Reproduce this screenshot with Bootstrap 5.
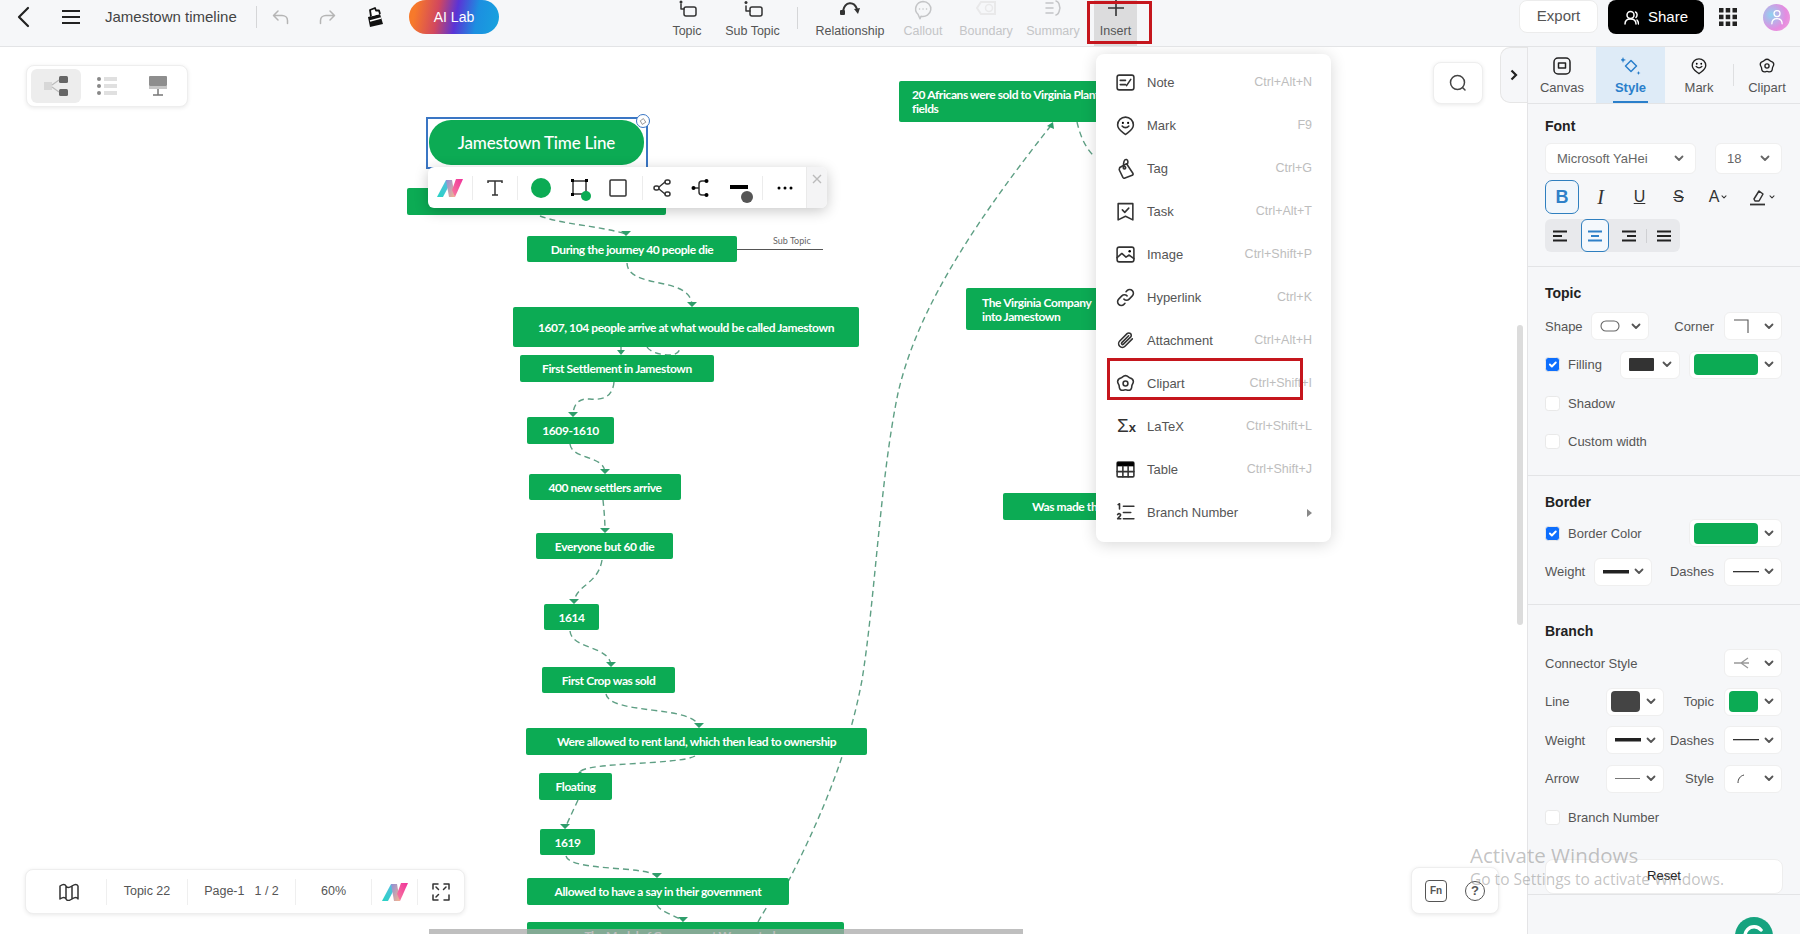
<!doctype html>
<html lang="en">
<head>
<meta charset="UTF-8" />
<title>Jamestown timeline</title>
<link href="https://cdn.jsdelivr.net/npm/bootstrap@5.3.0/dist/css/bootstrap.min.css" rel="stylesheet" />
<script src="https://cdn.jsdelivr.net/npm/bootstrap@5.3.0/dist/js/bootstrap.bundle.min.js"></script>
<style>
  html, body { height: 100%; margin: 0; overflow: hidden; }
  body { font-family: "Liberation Sans", Arial, sans-serif; font-size: 13px; color: #555; background: #fff; }
  .app { height: 100vh; position: relative; }
  .ic { fill: none; stroke: currentColor; stroke-width: 1.5; stroke-linecap: round; stroke-linejoin: round; }

  /* top bar */
  .topbar { height: 47px; flex: none; background: #f6f7f9; border-bottom: 1px solid #e3e4e6; overflow: hidden; }
  .tb-back { margin: -12px 0 0 16px; color: #222; }
  .tb-burger { margin: -12px 0 0 32px; color: #222; }
  .tb-title { margin: -12px 0 0 25px; width: 151px; font-size: 15px; color: #444; white-space: nowrap; }
  .tb-sep { width: 1px; height: 22px; margin-top: -12px; background: #d5d6d8; flex: none; }
  .tb-undo { margin: -12px 0 0 15px; color: #b5b5b5; }
  .tb-redo { margin: -12px 0 0 30px; color: #b5b5b5; }
  .tb-bucket { margin: -12px 0 0 30px; color: #111; }
  .ai-pill { margin-left: 26px; width: 90px; height: 34px; margin-top: -12px; border-radius: 17px; color: #fff; font-size: 14px;
    background: linear-gradient(100deg, #f7792a 8%, #d2475e 32%, #5a34d6 52%, #1c8fe0 74%, #17a3de 100%); }
  .tools { margin-left: 156px; }
  .tool { height: 46px; color: #555; white-space: nowrap; font-size: 12.5px; }
  .tool svg { display: block; color: #333; }
  .tool span { margin-top: 3px; line-height: 16px; }
  .tool.off, .tool.off svg { color: #c4c5c7; }
  .w-topic { width: 64px; } .w-sub { width: 67px; } .w-rel { width: 78px; } .w-call { width: 68px; }
  .w-bound { width: 58px; } .w-sum { width: 76px; } .w-ins { width: 43px; margin: 0 4px 0 3px; background: #dcdcdd; }
  .tool-sep { width: 1px; height: 22px; background: #d5d6d8; margin: 7px 13px 0 11px; }
  .btn-export { width: 79px; height: 33px; margin-top: -13px; background: #fff; border: 1px solid #ececec; border-radius: 8px; font-size: 15px; color: #555; }
  .btn-share { width: 96px; height: 34px; margin-top: -12px; margin-left: 10px; background: #000; border-radius: 8px; color: #fff; font-size: 15px; gap: 9px; }
  .tb-grid { margin-left: 15px; margin-top: -12px; }
  .tb-avatar { width: 27px; height: 27px; margin: -12px 10px 0 26px; border-radius: 50%;
    background: radial-gradient(circle at 30% 40%, #8fd3f0, #e58be0 60%, #f2a6d8); color: #fff; }
  .note-red { position: absolute; border: 3px solid #c5161d; pointer-events: none; z-index: 30; }
  .red-ins { left: 1087px; top: 1px; width: 65px; height: 43px; }
  .red-clip { left: 1107px; top: 311px; width: 196px; height: 42px; }

  /* canvas */
  .stage { flex: 1 1 auto; position: relative; overflow: hidden; background: #fff; min-width: 0; }
  .wires { position: absolute; left: 0; top: 0; }
  .wire { fill: none; stroke: #5e9f84; stroke-width: 1.4; stroke-dasharray: 6 4; }
  .tip { fill: #2f9e6b; }
  .nd { position: absolute; background: #0cab54; color: #fff; border-radius: 2px; display: flex; align-items: center; justify-content: center; padding-top: 1px;
    font-family: Lato, "Open Sans", sans-serif; font-weight: 700; font-size: 12px; letter-spacing: -.4px; white-space: nowrap; line-height: 14px; }
  .nd-left { justify-content: flex-start; text-align: left; }
  #n0 { left: 429px; top: 73px; width: 215px; height: 45px; border-radius: 22px; font-size: 17px; letter-spacing: -.2px; font-weight: 500; }
  #n1 { left: 407px; top: 141px; width: 259px; height: 27px; }
  #n2 { left: 527px; top: 189px; width: 210px; height: 26px; }
  #n3 { left: 513px; top: 260px; width: 346px; height: 40px; }
  #n4 { left: 520px; top: 308px; width: 194px; height: 27px; }
  #n5 { left: 527px; top: 370px; width: 87px; height: 27px; }
  #n6 { left: 529px; top: 427px; width: 152px; height: 26px; }
  #n7 { left: 536px; top: 486px; width: 137px; height: 26px; }
  #n8 { left: 544px; top: 557px; width: 55px; height: 26px; }
  #n9 { left: 542px; top: 620px; width: 133px; height: 26px; }
  #n10 { left: 526px; top: 681px; width: 341px; height: 27px; }
  #n11 { left: 539px; top: 726px; width: 73px; height: 27px; }
  #n12 { left: 540px; top: 782px; width: 55px; height: 26px; }
  #n13 { left: 527px; top: 831px; width: 262px; height: 27px; }
  #n14 { left: 527px; top: 875px; width: 317px; height: 27px; }
  #n15 { left: 899px; top: 34px; width: 300px; height: 41px; padding-left: 13px; }
  #n16 { left: 966px; top: 241px; width: 200px; height: 42px; padding-left: 16px; }
  #n17 { left: 1003px; top: 446px; width: 150px; height: 27px; padding-left: 29px; }
  .sel-box { position: absolute; left: 426px; top: 70px; width: 222px; height: 52px; border: 2px solid #3a76c4; }
  .sel-dot { position: absolute; left: 636px; top: 67px; width: 14px; height: 14px; background: #fff; border: 1.5px solid #3a76c4; border-radius: 50%; color: #555; }
  .sub-line { position: absolute; left: 737px; top: 202px; width: 86px; height: 1px; background: #555; }
  .sub-txt { position: absolute; left: 773px; top: 188px; font-family: Lato, sans-serif; font-size: 9px; color: #666; line-height: 12px; }

  .float-box { position: absolute; background: #fff; border: 1px solid #eee; border-radius: 8px; box-shadow: 0 1px 4px rgba(0,0,0,.09); }
  .palette { left: 26px; top: 18px; width: 162px; height: 42px; padding: 3px 4px; }
  .pal-on { width: 51px; background: #ededed; border-radius: 6px; }
  .pal-b { width: 52px; }
  .search-box { left: 1433px; top: 15px; width: 50px; height: 42px; color: #444; }
  .fold-tab { position: absolute; left: 1500px; top: 0; width: 27px; height: 56px; background: #f6f7f9; border: 1px solid #e6e6e6; border-right: 0; border-radius: 10px 0 0 10px; color: #222; }
  .vbar { position: absolute; left: 1517px; top: 278px; width: 6px; height: 300px; background: #dcdcdc; border-radius: 3px; }
  .hbar { position: absolute; left: 429px; top: 882px; width: 594px; height: 5px; background: rgba(170,170,170,.75); }

  .node-bar { position: absolute; left: 428px; top: 120px; width: 399px; height: 41px; background: #fff; border-radius: 6px; box-shadow: 0 3px 14px rgba(0,0,0,.22); color: #333; overflow: hidden; }
  .nb-logo { width: 44px; } .nb-cell { width: 44px; } .nb-c2 { width: 38.5px; position: relative; }
  .nb-sep { width: 1px; height: 24px; background: #ececec; flex: none; }
  .nb-gap { width: 4px; } .nb-more { width: 43px; color: #444; }
  .nb-x { flex: 1; background: #f4f4f5; border-left: 1px solid #eaeaea; color: #bbb; height: 100%; padding-top: 7px; }
  .nb-pip { position: absolute; border-radius: 50%; }
  .pip-g { width: 10px; height: 10px; background: #0cab54; left: 20px; top: 12px; }
  .pip-k { width: 12px; height: 12px; background: #555; left: 21px; top: 9px; }
  .nb-round { width: 20px; height: 20px; background: #0cab54; border-radius: 50%; }

  /* insert menu */
  .dropdown-menu.ins-menu { left: 1096px; top: 7px; width: 235px; height: 488px; padding: 7px 0 0; border: 0; border-radius: 8px; box-shadow: 0 2px 16px rgba(0,0,0,.16); z-index: 20; }
  .ins-menu .dropdown-item { height: 43px; padding: 0 19px 0 19px; display: flex; align-items: center; font-size: 13px; color: #555; }
  .ins-menu svg { color: #333; flex: none; }
  .mi-ico { width: 21px; margin-right: 11px; flex: none; }
  .mi-key { margin-left: auto; color: #bdbdbd; font-size: 12.5px; }
  .sigma { font-size: 19px; line-height: 18px; color: #333; padding-left: 2px; white-space: nowrap; }
  .sigma small { font-size: 13px; font-weight: 700; }

  .stat-bar { left: 25px; top: 822px; width: 440px; height: 45px; color: #555; font-size: 12.5px; }
  .sb-sep { width: 1px; height: 26px; background: #efefef; flex: none; }
  .sb-map { width: 80px; color: #333; padding-left: 5px; } .sb-topic { width: 80px; } .sb-page { width: 107px; gap: 10px; }
  .sb-zoom { width: 75px; } .sb-logo { width: 45px; } .sb-full { flex: 1; color: #333; }
  .fn-box { left: 1411px; top: 820px; width: 88px; height: 47px; gap: 18px; color: #555; }
  .fn-ico { width: 22px; height: 22px; border: 1.6px solid #555; border-radius: 4px; font-size: 10px; font-weight: 700; }
  .qm-ico { width: 20px; height: 20px; border: 1.6px solid #555; border-radius: 50%; font-size: 13px; font-weight: 700; }

  /* side panel */
  .side { width: 273px; flex: none; background: #f6f7f9; border-left: 1px solid #e4e4e6; position: relative; overflow: hidden; }
  .tabs { height: 57px; border-bottom: 1px solid #e3e4e6; margin-left: 0; }
  .tabx { color: #555; font-size: 13px; position: relative; line-height: 16px; padding-top: 2px; }
  .tabx svg { color: #222; margin-bottom: 5px; }
  .tx-a { width: 68px; } .tx-b { width: 69px; background: #deebf7; color: #2a7fcb; font-weight: 700; }
  .tx-b svg { color: #2a7fcb; }
  .tx-b::after { content: ""; position: absolute; left: 17px; width: 35px; bottom: 0; height: 2px; background: #2a7fcb; }
  .tx-sep { width: 1px; height: 22px; background: #dedfe1; align-self: center; }
  .sect { padding: 0 18px 0 17px; border-bottom: 1px solid #e3e4e6; }
  .sect:last-child { border-bottom: 0; }
  .sect h6 { font-size: 14px; font-weight: 700; color: #222; line-height: 16px; margin: 0; }
  .s-font { padding-top: 14px; padding-bottom: 14px; } .s-font h6 { margin-bottom: 9px; }
  .s-topic { padding-top: 18px; padding-bottom: 14px; } .s-topic h6 { margin-bottom: 6px; }
  .s-border { padding-top: 18px; padding-bottom: 13px; } .s-border h6 { margin-bottom: 4px; }
  .s-branch { padding-top: 18px; } .s-branch h6 { margin-bottom: 5px; }
  .prow { height: 38.5px; white-space: nowrap; }
  .pk { height: 28px; background: #fff; border: 1px solid #efefef; border-radius: 6px; padding: 0 7px 0 8px; flex: none; }
  .pk-f { width: 151px; height: 31px; padding: 0 11px; color: #666; }
  .pk-s { width: 67px; height: 31px; padding: 0 11px; color: #666; }
  .pk-58 { width: 58px; } .pk-60 { width: 60px; } .pk-93 { width: 93px; padding-left: 4px; }
  .swatch { height: 21px; border-radius: 4px; flex: 1; margin-right: 6px; }
  .sw-g { background: #0cab54; } .sw-k { background: #444; } .sw-d { background: #333; height: 13px; border-radius: 1px; margin: 0 8px 0 0; }
  .lb-47 { width: 46px; } .lb-49 { width: 49px; } .lb-61 { width: 61px; }
  .lb-r { margin-left: auto; margin-right: 10px; }
  .form-check-input.ck { width: 15px; height: 15px; margin: 0 8px 0 0; flex: none; border-color: #e9e9e9; }
  .lb-fill { width: 52px; }
  .fmt-row { height: 34px; margin-top: 6px; color: #333; font-size: 16px; }
  .fb { height: 34px; width: 39px; flex: none; }
  .fb-bold { width: 34px; margin-right: 2px; border: 1px solid #2f7fbf; border-radius: 7px; background: #f1f6fb; color: #2f80c8; font-weight: 700; font-size: 18px; }
  .fb-i { font-family: "Liberation Serif", serif; font-style: italic; font-size: 20px; }
  .fb-u { text-decoration: underline; } .fb-s { text-decoration: line-through; }
  .fb-a { width: 38px; margin-left: 1px; gap: 2px; } .fb-h { width: 50px; gap: 2px; }
  .al-row { width: 135px; height: 33px; margin-top: 5px; background: #e8e9ec; border-radius: 6px; color: #222; }
  .al { height: 33px; flex: none; }
  .al-1 { width: 30px; margin-right: 6px; } .al-2 { width: 28px; background: #f4f8fc; border: 1px solid #2f7fbf; border-radius: 6px; color: #2f80c8; }
  .al-3 { width: 34px; margin-left: 3px; } .al-4 { width: 33px; }
  .al-sep { width: 1px; height: 14px; background: #cfd0d3; }
  .btn-reset { display: block; width: 238px; height: 35px; margin-top: 22px; padding: 0; background: #fff; border: 1px solid #eee; border-radius: 8px; color: #222; font-size: 13px; }
  .gram { position: absolute; left: 207px; top: 870px; width: 38px; height: 38px; border-radius: 50%; background: #15a37f; color: #fff; }

  .act-win { position: absolute; left: 1470px; top: 842px; color: rgba(110,110,110,.42); font-family: "Open Sans", sans-serif; pointer-events: none; z-index: 40; white-space: nowrap; }
  .act-win b { display: block; font-weight: 400; font-size: 20.5px; line-height: 26px; }
  .act-win i { display: block; font-style: normal; font-size: 15.5px; line-height: 22px; }
</style>
</head>
<body>
<svg width="0" height="0" class="position-absolute">
  <defs>
    <linearGradient id="logoA" x1="0" y1="1" x2="1" y2="0"><stop offset="0" stop-color="#27d3c3"/><stop offset="1" stop-color="#5fb9e6"/></linearGradient>
    <linearGradient id="logoB" x1="0" y1="0" x2="1" y2="1"><stop offset="0" stop-color="#8c8fd8"/><stop offset="1" stop-color="#f7b48f"/></linearGradient>
    <linearGradient id="logoC" x1="0" y1="1" x2="1" y2="0"><stop offset="0" stop-color="#f77f9f"/><stop offset="1" stop-color="#f0309a"/></linearGradient>
    <symbol id="i-logo" viewBox="0 0 26 20"><path fill="url(#logoA)" d="M0 19 9 2h6L6 19Z"/><path fill="url(#logoB)" d="M9 2h6l3 17h-6Z"/><path fill="url(#logoC)" d="M15 12 19 1h7l-8 18Z"/></symbol>
    <symbol id="i-note" viewBox="0 0 20 20"><rect class="ic" x="2" y="3" width="16" height="14" rx="2"/><path class="ic" d="M5 8h5M5 12h5M11 13l4-6"/></symbol>
    <symbol id="i-mark" viewBox="0 0 20 20"><path class="ic" d="M10 18.5C7 16 2.5 14 2.5 9.5a7.5 7.5 0 0 1 15 0C17.5 14 13 16 10 18.5Z"/><path class="ic" d="M6.8 10.5c1.6 2 4.8 2 6.4 0"/><circle cx="7.5" cy="7.5" r="1"/><circle cx="12.5" cy="7.5" r="1"/></symbol>
    <symbol id="i-tag" viewBox="0 0 20 20"><path class="ic" d="M4.5 9 11 5.5l6 9a1.5 1.5 0 0 1-.6 2L9.5 19a1.5 1.5 0 0 1-2-.5L4 11.2Z"/><circle class="ic" cx="9" cy="9.3" r="1.2"/><path class="ic" d="M8.5 8C7.5 4 9 1 11 1.5c1.7.5 1.5 3 .7 4.5"/></symbol>
    <symbol id="i-task" viewBox="0 0 20 20"><path class="ic" d="M3 2.5h14V18l-7-3.5L3 18Z"/><path class="ic" d="M7 8.5l2.3 2.3 3.8-4"/></symbol>
    <symbol id="i-image" viewBox="0 0 20 20"><rect class="ic" x="2" y="3" width="16" height="14" rx="2"/><path class="ic" d="M2 13l4.5-4 4 3.5 3-2 4.5 3.5"/><circle cx="14" cy="7" r="1.2"/></symbol>
    <symbol id="i-link" viewBox="0 0 20 20"><path class="ic" d="M8.5 11.5a3.5 3.5 0 0 0 5 0l3-3a3.5 3.5 0 0 0-5-5l-1 1"/><path class="ic" d="M11.5 8.5a3.5 3.5 0 0 0-5 0l-3 3a3.5 3.5 0 0 0 5 5l1-1"/></symbol>
    <symbol id="i-clip" viewBox="0 0 20 20"><path class="ic" d="M16.5 8.5l-7 7a3.5 3.5 0 0 1-5-5l7-7a2.3 2.3 0 0 1 3.3 3.3L8 13.5A1 1 0 0 1 6.5 12L13 5.5"/></symbol>
    <symbol id="i-art" viewBox="0 0 20 20"><path class="ic" d="M10 2.500c2 0 3 1.500 4 2 1.500.5 3.500 1.500 3.500 3.500s-1.500 3-1.500 4.500c0 2.500-1.500 4-3.500 4-1 0-1.500-.5-2.500-.5s-1.500.5-2.500.5c-2 0-3.500-1.500-3.500-4C4 11 2.500 10 2.500 8s2-3 3.500-3.500c1-.5 2-2 4-2Z"/><circle class="ic" cx="10" cy="10" r="2.300"/></symbol>
    <symbol id="i-table" viewBox="0 0 20 20"><rect class="ic" x="2" y="3" width="16" height="14" rx="1"/><path d="M2 3h16v4H2z"/><path class="ic" d="M2 12h16M7.500 7v10M12.500 7v10"/></symbol>
    <symbol id="i-num" viewBox="0 0 20 20"><path class="ic" d="M8 4h10M8 10h7M8 16h10M3 2.500l1.300-.8v5M2.500 12c1-1.500 3-1 2.800.5-.1 1-2 2-2.800 3.500h3"/></symbol>
    <symbol id="i-chev" viewBox="0 0 10 7"><path d="M1.500 1.500 5 5l3.500-3.500" fill="none" stroke="currentColor" stroke-width="1.800" stroke-linecap="round" stroke-linejoin="round"/></symbol>
    <symbol id="i-left3" viewBox="0 0 16 12"><path d="M1 1.500h14M1 6h9M1 10.500h14" stroke="currentColor" stroke-width="1.800" fill="none"/></symbol>
    <symbol id="i-center3" viewBox="0 0 16 12"><path d="M1 1.500h14M4 6h8M1 10.500h14" stroke="currentColor" stroke-width="1.800" fill="none"/></symbol>
    <symbol id="i-right3" viewBox="0 0 16 12"><path d="M1 1.500h14M6 6h9M1 10.500h14" stroke="currentColor" stroke-width="1.800" fill="none"/></symbol>
    <symbol id="i-just3" viewBox="0 0 16 12"><path d="M1 1.500h14M1 6h14M1 10.500h14" stroke="currentColor" stroke-width="1.800" fill="none"/></symbol>
  </defs>
</svg>

<div class="app d-flex flex-column">
  <header class="topbar d-flex align-items-center">
    <svg class="tb-back" width="14" height="22" viewBox="0 0 14 22"><path d="M12 2 3 11l9 9" fill="none" stroke="currentColor" stroke-width="2.200" stroke-linecap="round" stroke-linejoin="round"/></svg>
    <svg class="tb-burger" width="18" height="16" viewBox="0 0 18 16"><path d="M0 2h18M0 8h18M0 14h18" stroke="currentColor" stroke-width="2"/></svg>
    <div class="tb-title">Jamestown timeline</div>
    <div class="tb-sep"></div>
    <svg class="tb-undo" width="17" height="16" viewBox="0 0 17 16"><path class="ic" d="M6 2 1.500 6.500 6 11M2 6.500h8c3 0 5.500 2 5.500 5v3"/></svg>
    <svg class="tb-redo" width="17" height="16" viewBox="0 0 17 16"><path class="ic" d="M11 2l4.500 4.500L11 11M15 6.500H7c-3 0-5.500 2-5.500 5v3"/></svg>
    <svg class="tb-bucket" width="17" height="20" viewBox="0 0 17 20"><path d="M2 10 14 7l3 10-13 3z" fill="currentColor"/><path d="M5 9.500 4 3l5-2 1 2.500 3 0 1 3.500" fill="#fff" stroke="currentColor" stroke-width="1.800" stroke-linejoin="round"/><path d="M4 14l11-3" stroke="#fff" stroke-width="1.600"/></svg>
    <div class="ai-pill d-flex align-items-center justify-content-center">AI Lab</div>

    <div class="tools d-flex align-items-start">
      <div class="tool w-topic d-flex flex-column align-items-center">
        <svg width="20" height="20" viewBox="0 0 20 20"><circle cx="4" cy="2" r="1.500" fill="currentColor"/><path class="ic" d="M4 4v5h3"/><rect class="ic" x="7" y="7" width="12" height="9" rx="2"/></svg><span>Topic</span>
      </div>
      <div class="tool w-sub d-flex flex-column align-items-center">
        <svg width="20" height="20" viewBox="0 0 20 20"><circle cx="3" cy="2.500" r="1.500" fill="currentColor"/><path class="ic" d="M3 6v5h4"/><rect class="ic" x="7" y="7" width="12" height="9" rx="2"/></svg><span>Sub Topic</span>
      </div>
      <div class="tool-sep"></div>
      <div class="tool w-rel d-flex flex-column align-items-center">
        <svg width="22" height="20" viewBox="0 0 22 20"><path d="M4 11C6 1 15 1 18 9" fill="none" stroke="currentColor" stroke-width="2"/><path d="M15 9l6-1-2 6z" fill="currentColor"/><rect x="1" y="10" width="5" height="5" rx="1" fill="currentColor"/></svg><span>Relationship</span>
      </div>
      <div class="tool w-call off d-flex flex-column align-items-center">
        <svg width="20" height="20" viewBox="0 0 20 20"><path class="ic" d="M10 1.500a8 7.500 0 1 1-2 14.800l-1 2.500-2-4.500A8 7.500 0 0 1 10 1.500Z"/><path class="ic" d="M6.500 9h.1M10 9h.1M13.500 9h.1"/></svg><span>Callout</span>
      </div>
      <div class="tool w-bound off d-flex flex-column align-items-center">
        <svg width="22" height="20" viewBox="0 0 22 20"><path d="M6 2h14v12H6L2 8Z" fill="none" stroke="#e9e9ea" stroke-width="2"/><circle cx="14" cy="8" r="3.500" fill="none" stroke="#e9e9ea" stroke-width="1.500"/></svg><span>Boundary</span>
      </div>
      <div class="tool w-sum off d-flex flex-column align-items-center">
        <svg width="18" height="20" viewBox="0 0 18 20"><path class="ic" d="M2 3h7M2 8h7M2 13h7M12 1c4 1 3 5 4 7-1 2 0 6-4 7"/></svg><span>Summary</span>
      </div>
      <div class="tool w-ins d-flex flex-column align-items-center">
        <svg width="18" height="20" viewBox="0 0 18 20"><path d="M9 0v16M1 8h16" stroke="#333" stroke-width="1.600"/></svg><span>Insert</span>
      </div>
    </div>

    <div class="btn-export ms-auto d-flex align-items-center justify-content-center">Export</div>
    <div class="btn-share d-flex align-items-center justify-content-center">
      <svg width="15" height="15" viewBox="0 0 15 15"><circle class="ic" cx="6.500" cy="5" r="3.500"/><path class="ic" d="M1 14c0-3 2-5 5.500-5S12 11 12 14M11.500 2c2 1 2 4 .5 5.500M13 10c1 1 1.500 2 1.500 4"/></svg>
      Share
    </div>
    <svg class="tb-grid" width="18" height="18" viewBox="0 0 18 18" fill="#222"><rect width="4.500" height="4.500"/><rect x="6.700" width="4.500" height="4.500"/><rect x="13.500" width="4.500" height="4.500"/><rect y="6.700" width="4.500" height="4.500"/><rect x="6.700" y="6.700" width="4.500" height="4.500"/><rect x="13.500" y="6.700" width="4.500" height="4.500"/><rect y="13.500" width="4.500" height="4.500"/><rect x="6.700" y="13.500" width="4.500" height="4.500"/><rect x="13.500" y="13.500" width="4.500" height="4.500"/></svg>
    <div class="tb-avatar d-flex align-items-center justify-content-center">
      <svg width="12" height="16" viewBox="0 0 14 18"><circle class="ic" cx="7" cy="5" r="3.500"/><path class="ic" d="M1 17c0-4 2.500-6 6-6s6 2 6 6"/></svg>
    </div>
  </header>
  <div class="note-red red-ins"></div>

  <div class="d-flex flex-grow-1 overflow-hidden">
    <main class="stage">
      <svg class="wires" width="1527" height="887" viewBox="0 47 1527 887">
        <path class="wire" d="M540 216C560 224 600 226 626 234"/>
        <path class="wire" d="M627 263C628 290 690 275 692 305"/>
        <path class="wire" d="M621 347V354M647 347C650 352 660 355 670 355 676 355 680 352 680 347"/>
        <path class="wire" d="M614 382C612 405 590 398 585 399 578 400 573 405 573 416"/>
        <path class="wire" d="M570 444C572 460 605 455 605 473"/>
        <path class="wire" d="M603 500C604 510 605 520 605 532"/>
        <path class="wire" d="M602 560C598 585 575 585 574 603"/>
        <path class="wire" d="M570 631C572 650 610 645 611 666"/>
        <path class="wire" d="M606 694C610 715 695 705 699 727"/>
        <path class="wire" d="M695 756C680 765 585 762 580 772"/>
        <path class="wire" d="M578 800 565 828"/>
        <path class="wire" d="M566 856C570 872 650 865 657 877"/>
        <path class="wire" d="M657 905C660 912 675 915 683 921"/>
        <path class="wire" d="M758 922C770 900 780 890 789 880 825 810 850 745 862 680 875 600 880 480 898 393 915 320 960 240 1053 123"/>
        <path class="wire" d="M1077 122C1080 135 1085 148 1095 157"/>
        <path class="tip" d="M626 236l-5-5h10zM692 307l-5-5h10zM621 355l-4-5h8zM573 417l-5-5h10zM605 474l-5-5h10zM605 533l-5-5h10zM574 604l-5-5h10zM611 667l-5-5h10zM699 728l-5-5h10zM580 771l-5 5h10zM565 829l-5-5h10zM657 878l-5-5h10zM683 922l-5-5h10zM1053 122l-6 4 7 3z"/>
      </svg>

      <div class="nd" id="n1"></div>
      <div class="nd" id="n2">During the journey 40 people die</div>
      <div class="nd" id="n3">1607, 104 people arrive at what would be called Jamestown</div>
      <div class="nd" id="n4">First Settlement in Jamestown</div>
      <div class="nd" id="n5">1609-1610</div>
      <div class="nd" id="n6">400 new settlers arrive</div>
      <div class="nd" id="n7">Everyone but 60 die</div>
      <div class="nd" id="n8">1614</div>
      <div class="nd" id="n9">First Crop was sold</div>
      <div class="nd" id="n10">Were allowed to rent land, which then lead to ownership</div>
      <div class="nd" id="n11">Floating</div>
      <div class="nd" id="n12">1619</div>
      <div class="nd" id="n13">Allowed to have a say in their government</div>
      <div class="nd" id="n14">The Model of Government We use today</div>
      <div class="nd nd-left" id="n15"><div>20 Africans were sold to Virginia Plantation<br>fields</div></div>
      <div class="nd nd-left" id="n16"><div>The Virginia Company<br>into Jamestown</div></div>
      <div class="nd nd-left" id="n17">Was made the capital</div>
      <div class="sub-line"></div>
      <div class="sub-txt">Sub Topic</div>
      <div class="sel-box"></div>
      <div class="nd" id="n0">Jamestown Time Line</div>
      <div class="sel-dot d-flex align-items-center justify-content-center">
        <svg width="8" height="8" viewBox="0 0 20 20"><path class="ic" d="M4 9 11 4l6 9-8 5Z" stroke-width="3"/></svg>
      </div>

      <div class="node-bar d-flex align-items-center">
        <div class="nb-logo d-flex justify-content-center"><svg width="26" height="20"><use href="#i-logo"/></svg></div>
        <div class="nb-sep"></div>
        <div class="nb-cell d-flex justify-content-center">
          <svg width="18" height="18" viewBox="0 0 18 18"><path d="M2 4V2h14v2M9 2v14M6 16h6" fill="none" stroke="currentColor" stroke-width="1.500"/></svg>
        </div>
        <div class="nb-sep"></div>
        <div class="nb-c2 d-flex justify-content-center ms-1"><div class="nb-round"></div></div>
        <div class="nb-c2 d-flex justify-content-center">
          <svg width="17" height="17" viewBox="0 0 17 17"><path d="M2 2h13v13H2z" fill="none" stroke="currentColor" stroke-width="1.500"/><path d="M0 0h3v3H0zM14 0h3v3h-3zM0 14h3v3H0z"/></svg>
          <span class="nb-pip pip-g"></span>
        </div>
        <div class="nb-c2 d-flex justify-content-center">
          <svg width="18" height="18" viewBox="0 0 18 18"><rect x="1" y="1" width="16" height="16" rx="1" fill="none" stroke="currentColor" stroke-width="1.500"/></svg>
        </div>
        <div class="nb-gap"></div><div class="nb-sep"></div>
        <div class="nb-c2 d-flex justify-content-center">
          <svg width="18" height="18" viewBox="0 0 18 18"><rect class="ic" x="1" y="7" width="5" height="4" rx="2"/><rect class="ic" x="12" y="1" width="5" height="4" rx="2"/><rect class="ic" x="12" y="13" width="5" height="4" rx="2"/><path class="ic" d="M6 8l6-5M6 10l6 5"/></svg>
        </div>
        <div class="nb-c2 d-flex justify-content-center">
          <svg width="18" height="18" viewBox="0 0 18 18"><path class="ic" d="M3 9h5M15 2h-4c-2 0-3 1-3 3v8c0 2 1 3 3 3h4"/><circle cx="2.500" cy="9" r="2"/><circle cx="15.500" cy="2" r="2"/><circle cx="15.500" cy="16" r="2"/></svg>
        </div>
        <div class="nb-c2 d-flex justify-content-center">
          <svg width="18" height="12" viewBox="0 0 18 12"><rect y="3" width="18" height="4"/></svg>
          <span class="nb-pip pip-k"></span>
        </div>
        <div class="nb-gap"></div><div class="nb-sep"></div>
        <div class="nb-more d-flex justify-content-center">
          <svg width="16" height="4" viewBox="0 0 16 4"><circle cx="2" cy="2" r="1.500"/><circle cx="8" cy="2" r="1.500"/><circle cx="14" cy="2" r="1.500"/></svg>
        </div>
        <div class="nb-x d-flex justify-content-center">
          <svg width="10" height="10" viewBox="0 0 10 10"><path d="M1 1l8 8M9 1 1 9" stroke="currentColor" stroke-width="1.400"/></svg>
        </div>
      </div>

      <div class="float-box palette d-flex align-items-stretch">
        <div class="pal-on d-flex align-items-center justify-content-center">
          <svg width="26" height="24" viewBox="0 0 26 24"><rect x="16" y="2" width="9" height="7" rx="1.500" fill="#666"/><rect x="16" y="15" width="9" height="7" rx="1.500" fill="#666"/><rect x="1" y="8" width="8" height="8" fill="#d7d7d7"/><path d="M9 11l7-5M9 13l7 5" stroke="#bbb" stroke-width="1.200"/></svg>
        </div>
        <div class="pal-b d-flex align-items-center justify-content-center">
          <svg width="20" height="20" viewBox="0 0 20 20"><circle cx="2" cy="3" r="2" fill="#888"/><circle cx="2" cy="10" r="2" fill="#888"/><circle cx="2" cy="17" r="2" fill="#888"/><rect x="7" y="1" width="13" height="4" fill="#e0e0e0"/><rect x="7" y="8" width="13" height="4" fill="#e0e0e0"/><rect x="7" y="15" width="13" height="4" fill="#e0e0e0"/></svg>
        </div>
        <div class="pal-b d-flex align-items-center justify-content-center">
          <svg width="18" height="20" viewBox="0 0 18 20"><rect width="18" height="10" rx="1" fill="#8e8e8e"/><rect y="10" width="18" height="3" fill="#c6c6c6"/><path d="M9 13v6M4 19h10" stroke="#777" stroke-width="1.500"/></svg>
        </div>
      </div>
      <div class="float-box search-box d-flex align-items-center justify-content-center">
        <svg width="18" height="18" viewBox="0 0 18 18"><circle class="ic" cx="8.500" cy="8.500" r="7"/><path class="ic" d="M13.500 13.500 16 16"/></svg>
      </div>
      <div class="fold-tab d-flex align-items-center justify-content-center">
        <svg width="8" height="12" viewBox="0 0 8 12"><path d="M1.500 1.500 6 6l-4.500 4.500" fill="none" stroke="currentColor" stroke-width="2.200"/></svg>
      </div>
      <div class="vbar"></div>
      <div class="hbar"></div>

      <ul class="dropdown-menu show ins-menu list-unstyled">
        <li><a class="dropdown-item" href="#"><svg class="mi-ico" width="21" height="21"><use href="#i-note"/></svg>Note<span class="mi-key">Ctrl+Alt+N</span></a></li>
        <li><a class="dropdown-item" href="#"><svg class="mi-ico" width="21" height="21"><use href="#i-mark"/></svg>Mark<span class="mi-key">F9</span></a></li>
        <li><a class="dropdown-item" href="#"><svg class="mi-ico" width="21" height="21"><use href="#i-tag"/></svg>Tag<span class="mi-key">Ctrl+G</span></a></li>
        <li><a class="dropdown-item" href="#"><svg class="mi-ico" width="21" height="21"><use href="#i-task"/></svg>Task<span class="mi-key">Ctrl+Alt+T</span></a></li>
        <li><a class="dropdown-item" href="#"><svg class="mi-ico" width="21" height="21"><use href="#i-image"/></svg>Image<span class="mi-key">Ctrl+Shift+P</span></a></li>
        <li><a class="dropdown-item" href="#"><svg class="mi-ico" width="21" height="21"><use href="#i-link"/></svg>Hyperlink<span class="mi-key">Ctrl+K</span></a></li>
        <li><a class="dropdown-item" href="#"><svg class="mi-ico" width="21" height="21"><use href="#i-clip"/></svg>Attachment<span class="mi-key">Ctrl+Alt+H</span></a></li>
        <li><a class="dropdown-item" href="#"><svg class="mi-ico" width="21" height="21"><use href="#i-art"/></svg>Clipart<span class="mi-key">Ctrl+Shift+I</span></a></li>
        <li><a class="dropdown-item" href="#"><span class="mi-ico sigma">Σ<small>x</small></span>LaTeX<span class="mi-key">Ctrl+Shift+L</span></a></li>
        <li><a class="dropdown-item" href="#"><svg class="mi-ico" width="21" height="21"><use href="#i-table"/></svg>Table<span class="mi-key">Ctrl+Shift+J</span></a></li>
        <li><a class="dropdown-item" href="#"><svg class="mi-ico" width="21" height="21"><use href="#i-num"/></svg>Branch Number<span class="mi-key"><svg width="5" height="8" viewBox="0 0 5 8"><path d="M0 0l5 4-5 4z" fill="#888"/></svg></span></a></li>
      </ul>
      <div class="note-red red-clip"></div>

      <div class="float-box stat-bar d-flex align-items-center">
        <div class="sb-map d-flex justify-content-center">
          <svg width="20" height="18" viewBox="0 0 20 18"><path class="ic" d="M1 3c3-2 5-2 6 0s3 2 6 0 5-2 6 0v13c-1-2-3-2-6 0s-5 2-6 0-3-2-6 0ZM7 3v13M13 3v13" stroke-width="1.300"/></svg>
        </div>
        <div class="sb-sep"></div>
        <div class="sb-topic text-center">Topic 22</div>
        <div class="sb-sep"></div>
        <div class="sb-page d-flex justify-content-center"><span>Page-1</span><span>1 / 2</span></div>
        <div class="sb-sep"></div>
        <div class="sb-zoom text-center">60%</div>
        <div class="sb-sep"></div>
        <div class="sb-logo d-flex justify-content-center"><svg width="26" height="20"><use href="#i-logo"/></svg></div>
        <div class="sb-sep"></div>
        <div class="sb-full d-flex justify-content-center">
          <svg width="18" height="18" viewBox="0 0 18 18"><path class="ic" d="M1 6V1h5M12 1h5v5M1 12v5h5M12 17h5v-5M4 4l2.500 2.500M14 4l-2.500 2.500M4 14l2.500-2.500" stroke-width="1.600"/></svg>
        </div>
      </div>
      <div class="float-box fn-box d-flex align-items-center justify-content-center">
        <div class="fn-ico d-flex align-items-center justify-content-center">Fn</div>
        <div class="qm-ico d-flex align-items-center justify-content-center">?</div>
      </div>
    </main>

    <aside class="side">
      <div class="tabs d-flex align-items-stretch">
        <div class="tabx tx-a d-flex flex-column align-items-center justify-content-center">
          <svg width="18" height="18" viewBox="0 0 18 18"><rect class="ic" x="1" y="1" width="16" height="16" rx="4" stroke-width="1.700"/><rect class="ic" x="5.500" y="6" width="7" height="5" stroke-width="1.500"/></svg>Canvas
        </div>
        <div class="tabx tx-b d-flex flex-column align-items-center justify-content-center">
          <svg width="20" height="18" viewBox="0 0 20 18"><path class="ic" d="M10 3.500 15.500 9 10 14.500 4.500 9Z"/><path d="M2 0l.8 2L5 3 2.800 3.800 2 6 1.200 3.800-1 3l2.200-1ZM17.500 14l.6 1.400 1.400.6-1.400.6-.6 1.400-.6-1.400-1.400-.6 1.400-.6Z" fill="currentColor"/></svg>Style
        </div>
        <div class="tabx tx-a d-flex flex-column align-items-center justify-content-center">
          <svg width="18" height="18"><use href="#i-mark"/></svg>Mark
        </div>
        <div class="tx-sep"></div>
        <div class="tabx flex-grow-1 d-flex flex-column align-items-center justify-content-center">
          <svg width="18" height="18"><use href="#i-art"/></svg>Clipart
        </div>
      </div>

      <section class="sect s-font">
        <h6>Font</h6>
        <div class="d-flex justify-content-between">
          <div class="pk pk-f d-flex align-items-center justify-content-between">Microsoft YaHei<svg width="10" height="7"><use href="#i-chev"/></svg></div>
          <div class="pk pk-s d-flex align-items-center justify-content-between">18<svg width="10" height="7"><use href="#i-chev"/></svg></div>
        </div>
        <div class="fmt-row d-flex align-items-center">
          <div class="fb fb-bold d-flex align-items-center justify-content-center">B</div>
          <div class="fb fb-i d-flex align-items-center justify-content-center">I</div>
          <div class="fb fb-u d-flex align-items-center justify-content-center">U</div>
          <div class="fb fb-s d-flex align-items-center justify-content-center">S</div>
          <div class="fb fb-a d-flex align-items-center justify-content-center">A<svg width="6" height="4"><use href="#i-chev"/></svg></div>
          <div class="fb fb-h d-flex align-items-center justify-content-center">
            <svg width="18" height="18" viewBox="0 0 18 18"><path class="ic" d="M5 11 10 3l4 3-4 7H6Z"/><path d="M1 16.500h15" stroke="currentColor" stroke-width="1.800"/></svg><svg width="6" height="4"><use href="#i-chev"/></svg>
          </div>
        </div>
        <div class="al-row d-flex align-items-center">
          <div class="al al-1 d-flex align-items-center justify-content-center"><svg width="16" height="12"><use href="#i-left3"/></svg></div>
          <div class="al al-2 d-flex align-items-center justify-content-center"><svg width="16" height="12"><use href="#i-center3"/></svg></div>
          <div class="al al-3 d-flex align-items-center justify-content-center"><svg width="16" height="12"><use href="#i-right3"/></svg></div>
          <div class="al-sep"></div>
          <div class="al al-4 d-flex align-items-center justify-content-center"><svg width="16" height="12"><use href="#i-just3"/></svg></div>
        </div>
      </section>

      <section class="sect s-topic">
        <h6>Topic</h6>
        <div class="prow d-flex align-items-center">
          <span class="lb-47">Shape</span>
          <div class="pk pk-58 d-flex align-items-center justify-content-between"><svg width="20" height="12" viewBox="0 0 20 12"><rect x="1" y="1" width="18" height="10" rx="5" fill="none" stroke="#666" stroke-width="1.100"/></svg><svg width="10" height="7"><use href="#i-chev"/></svg></div>
          <span class="lb-r">Corner</span>
          <div class="pk pk-58 d-flex align-items-center justify-content-between"><svg width="16" height="14" viewBox="0 0 16 14"><path d="M1 1h14v13" fill="none" stroke="#555" stroke-width="1.100"/></svg><svg width="10" height="7"><use href="#i-chev"/></svg></div>
        </div>
        <div class="prow d-flex align-items-center">
          <input class="form-check-input ck" type="checkbox" checked />
          <span class="lb-fill">Filling</span>
          <div class="pk pk-60 d-flex align-items-center"><div class="swatch sw-d"></div><svg width="10" height="7"><use href="#i-chev"/></svg></div>
          <div class="pk pk-93 ms-auto d-flex align-items-center"><div class="swatch sw-g"></div><svg width="10" height="7"><use href="#i-chev"/></svg></div>
        </div>
        <div class="prow d-flex align-items-center"><input class="form-check-input ck" type="checkbox" /><span>Shadow</span></div>
        <div class="prow d-flex align-items-center"><input class="form-check-input ck" type="checkbox" /><span>Custom width</span></div>
      </section>

      <section class="sect s-border">
        <h6>Border</h6>
        <div class="prow d-flex align-items-center">
          <input class="form-check-input ck" type="checkbox" checked />
          <span>Border Color</span>
          <div class="pk pk-93 ms-auto d-flex align-items-center"><div class="swatch sw-g"></div><svg width="10" height="7"><use href="#i-chev"/></svg></div>
        </div>
        <div class="prow d-flex align-items-center">
          <span class="lb-49">Weight</span>
          <div class="pk pk-58 d-flex align-items-center justify-content-between"><svg width="26" height="4" viewBox="0 0 26 4"><rect width="26" height="3.500" fill="#222"/></svg><svg width="10" height="7"><use href="#i-chev"/></svg></div>
          <span class="lb-r">Dashes</span>
          <div class="pk pk-58 d-flex align-items-center justify-content-between"><svg width="26" height="2" viewBox="0 0 26 2"><rect width="26" height="1.300" fill="#333"/></svg><svg width="10" height="7"><use href="#i-chev"/></svg></div>
        </div>
      </section>

      <section class="sect s-branch">
        <h6>Branch</h6>
        <div class="prow d-flex align-items-center">
          <span>Connector Style</span>
          <div class="pk pk-58 ms-auto d-flex align-items-center justify-content-between"><svg width="18" height="14" viewBox="0 0 18 14"><path d="M1 7h7M8 7l7-5M8 7h8M8 7l7 5" fill="none" stroke="#999" stroke-width="1.300"/></svg><svg width="10" height="7"><use href="#i-chev"/></svg></div>
        </div>
        <div class="prow d-flex align-items-center">
          <span class="lb-61">Line</span>
          <div class="pk pk-58 d-flex align-items-center ps-1"><div class="swatch sw-k"></div><svg width="10" height="7"><use href="#i-chev"/></svg></div>
          <span class="lb-r">Topic</span>
          <div class="pk pk-58 d-flex align-items-center ps-1"><div class="swatch sw-g"></div><svg width="10" height="7"><use href="#i-chev"/></svg></div>
        </div>
        <div class="prow d-flex align-items-center">
          <span class="lb-61">Weight</span>
          <div class="pk pk-58 d-flex align-items-center justify-content-between"><svg width="26" height="4" viewBox="0 0 26 4"><rect width="26" height="3.500" fill="#222"/></svg><svg width="10" height="7"><use href="#i-chev"/></svg></div>
          <span class="lb-r">Dashes</span>
          <div class="pk pk-58 d-flex align-items-center justify-content-between"><svg width="26" height="2" viewBox="0 0 26 2"><rect width="26" height="1.300" fill="#333"/></svg><svg width="10" height="7"><use href="#i-chev"/></svg></div>
        </div>
        <div class="prow d-flex align-items-center">
          <span class="lb-61">Arrow</span>
          <div class="pk pk-58 d-flex align-items-center justify-content-between"><svg width="25" height="2" viewBox="0 0 25 2"><rect width="25" height="1" fill="#777"/></svg><svg width="10" height="7"><use href="#i-chev"/></svg></div>
          <span class="lb-r">Style</span>
          <div class="pk pk-58 d-flex align-items-center justify-content-between"><svg width="16" height="10" viewBox="0 0 16 10"><path d="M5 9C5 5 7 2 11 1" fill="none" stroke="#444" stroke-width="1"/></svg><svg width="10" height="7"><use href="#i-chev"/></svg></div>
        </div>
        <div class="prow d-flex align-items-center"><input class="form-check-input ck" type="checkbox" /><span>Branch Number</span></div>
        <button class="btn-reset" type="button">Reset</button>
      </section>

      <div class="gram d-flex align-items-center justify-content-center">
        <svg width="26" height="26" viewBox="0 0 26 26"><path d="M20 7a9 9 0 1 0 1 10" fill="none" stroke="currentColor" stroke-width="3.500" stroke-linecap="round"/></svg>
      </div>
    </aside>
  </div>

  <div class="act-win"><b>Activate Windows</b><i>Go to Settings to activate Windows.</i></div>
</div>
</body>
</html>
